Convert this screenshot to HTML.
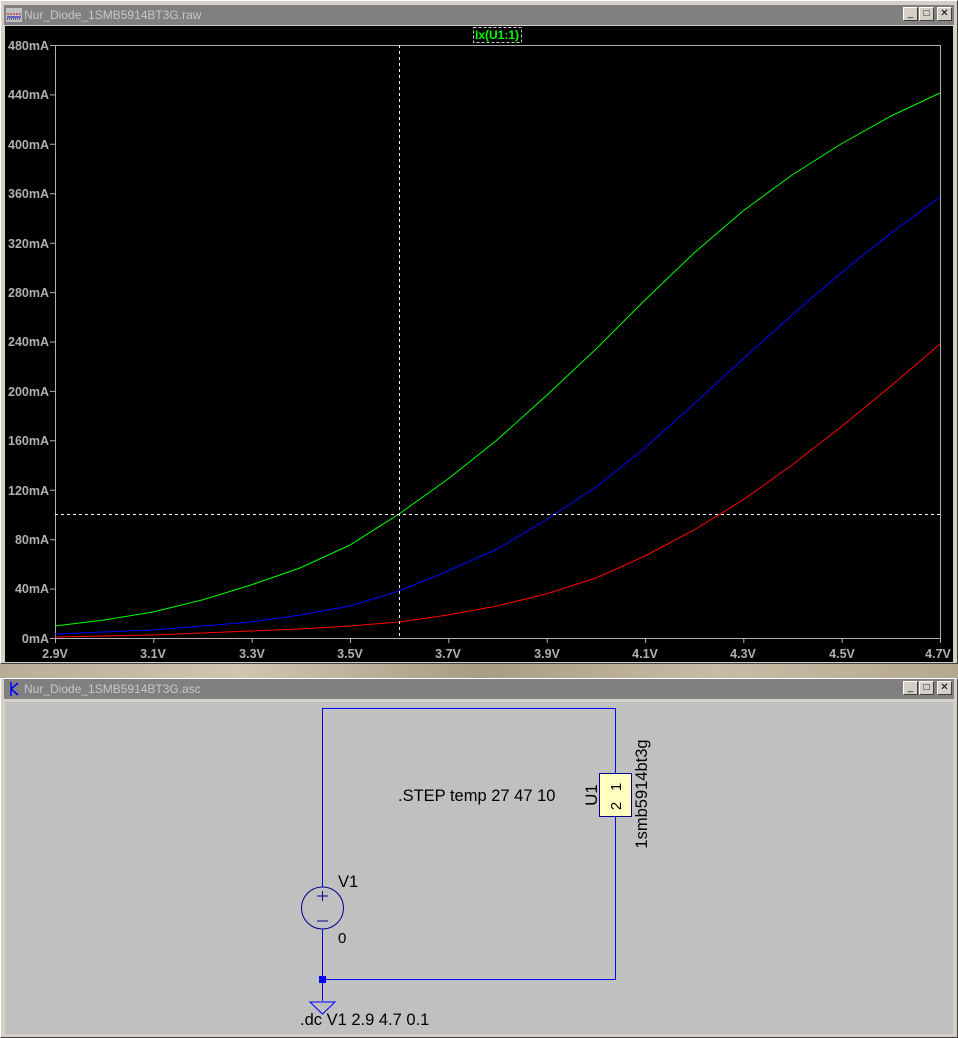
<!DOCTYPE html>
<html><head><style>
body{margin:0;width:958px;height:1038px;background:#d4d0c8;position:relative;overflow:hidden;font-family:"Liberation Sans",sans-serif}
.win{position:absolute;left:0;width:958px;background:#d4d0c8;border:1px solid #fff;box-sizing:border-box;border-right-color:#404040;border-bottom-color:#404040}
.tb{position:absolute;left:4px;right:4px;height:20px;background:#808080;color:#c8c8c8;font-size:12px;line-height:20px;padding-left:20px;box-sizing:border-box}
.btns{position:absolute;right:2px;top:2px;display:flex;gap:1px}
.btns div{width:15px;height:14px;background:#d4d0c8;border:1px solid #fff;border-right-color:#404040;border-bottom-color:#404040;box-sizing:border-box;font-size:10px;line-height:12px;text-align:center;color:#000}
</style></head><body>
<div class="win" style="top:0;height:664px"></div>
<div class="tb" style="top:5px;">Nur_Diode_1SMB5914BT3G.raw
<svg style="position:absolute;left:2px;top:3px" width="16" height="14"><rect x="0" y="0" width="16" height="14" fill="#c0c0c0"/><path d="M1 6h14" stroke="#c00" stroke-dasharray="2 1"/><path d="M1 9h14" stroke="#00c"/><path d="M1 11h14" stroke="#000" stroke-dasharray="1 1"/></svg>
<div class="btns"><div>_</div><div>□</div><div style="margin-left:2px">✕</div></div></div>
<div style="position:absolute;left:0;top:664px;width:958px;height:14px;background:linear-gradient(90deg,#b8ad98,#d0c6b0,#a89c84,#c8bca6,#b4a890)"></div>
<svg style="position:absolute;left:5px;top:26px" width="948" height="636">
<rect width="948" height="636" fill="#000"/>
<g transform="translate(-5,-26)" font-family="Liberation Sans" font-size="12.5" font-weight="bold" fill="#b0b0b0">
<rect x="55.5" y="45.5" width="885" height="593" fill="none" stroke="#b0b0b0"/>
<g stroke="#b0b0b0">
<path d="M50 45.5h5M50 94.9h5M50 144.3h5M50 193.8h5M50 243.2h5M50 292.6h5M50 342h5M50 391.4h5M50 440.8h5M50 490.3h5M50 539.7h5M50 589.1h5M50 638.5h5"/>
<path d="M55.5 638v5M153.8 638v5M252.2 638v5M350.5 638v5M448.8 638v5M547.2 638v5M645.5 638v5M743.8 638v5M842.2 638v5M940.5 638v5"/>
</g>
<g text-anchor="end">
<text x="49" y="50">480mA</text><text x="49" y="99">440mA</text><text x="49" y="149">400mA</text><text x="49" y="198">360mA</text><text x="49" y="248">320mA</text><text x="49" y="297">280mA</text><text x="49" y="346">240mA</text><text x="49" y="396">200mA</text><text x="49" y="445">160mA</text><text x="49" y="495">120mA</text><text x="49" y="544">80mA</text><text x="49" y="593">40mA</text><text x="49" y="643">0mA</text>
</g>
<g text-anchor="middle">
<text x="55" y="658">2.9V</text><text x="153" y="658">3.1V</text><text x="252" y="658">3.3V</text><text x="350" y="658">3.5V</text><text x="448" y="658">3.7V</text><text x="547" y="658">3.9V</text><text x="645" y="658">4.1V</text><text x="743" y="658">4.3V</text><text x="842" y="658">4.5V</text><text x="938" y="658">4.7V</text>
</g>
<rect x="473.5" y="27.5" width="48" height="15" fill="none" stroke="#ccc" stroke-dasharray="3 2"/>
<text x="497" y="39" text-anchor="middle" fill="#00ff00" font-size="12">Ix(U1:1)</text>
<g fill="none" stroke-width="1">
<polyline stroke="#00ff00" points="55,626 104,620 153,612 202,600 251,585 300,568 350,545 399,514 448,479 497,440 546,396 596,349 645,300 694,253 743,211 792,175 841,144 891,116 940,93"/>
<polyline stroke="#0000ff" points="55,634 104,632 153,630 202,626 251,622 300,615 350,606 399,591 448,571 497,549 546,520 596,487 645,448 694,404 743,359 792,315 841,273 891,233 940,197"/>
<polyline stroke="#ff0000" points="55,637 104,636 153,635 202,633 251,631 300,629 350,626 399,622 448,615 497,606 546,594 596,578 645,556 694,530 743,500 792,465 841,427 891,386 940,344"/>
</g>
<g stroke="#fff" stroke-dasharray="3 3"><path d="M399.5 45v593"/><path d="M55 514.5h885"/></g>
</g></svg>
<div class="win" style="top:678px;height:360px"></div>
<div class="tb" style="top:679px;">Nur_Diode_1SMB5914BT3G.asc
<svg style="position:absolute;left:3px;top:1px" width="14" height="18"><path d="M4 2v14M4 9l7-6M4 9l7 6M9 13l2 2" stroke="#0000ff" stroke-width="1.5" fill="none"/></svg>
<div class="btns"><div>_</div><div>□</div><div style="margin-left:2px">✕</div></div></div>
<svg style="position:absolute;left:5px;top:702px" width="948" height="332">
<rect width="948" height="332" fill="#c0c0c0"/>
<g transform="translate(-5,-702)">
<g stroke="#0000ff" fill="none">
<path d="M322.5 708.5h293v271h-293zM322.5 979v22"/>
<path d="M615.5 708v65M615.5 817v163"/>
<circle cx="322.5" cy="908" r="21" stroke="#00008b" fill="#c0c0c0"/>
<path d="M317 896h11M322.5 891v10M317 921h11" stroke="#00008b"/>
<path d="M310 1002h25l-12.5 12z"/>
</g>
<rect x="319" y="976" width="7" height="7" fill="#0000ff"/>
<rect x="599.5" y="773.5" width="32" height="43" fill="#ffffc0" stroke="#00008b"/>
<g font-size="16.5" fill="#000">
<text x="398" y="801">.STEP temp 27 47 10</text>
<text x="338" y="887">V1</text>
<text x="338" y="943" font-size="15">0</text>
<text x="300" y="1025">.dc V1 2.9 4.7 0.1</text>
<text transform="translate(621,787) rotate(-90)" text-anchor="middle" font-size="15">1</text>
<text transform="translate(621,806) rotate(-90)" text-anchor="middle" font-size="15">2</text>
<text transform="translate(597,795) rotate(-90)" text-anchor="middle" font-size="17">U1</text>
<text transform="translate(647,794) rotate(-90)" text-anchor="middle" font-size="16.5">1smb5914bt3g</text>
</g>
</g></svg>
</body></html>
